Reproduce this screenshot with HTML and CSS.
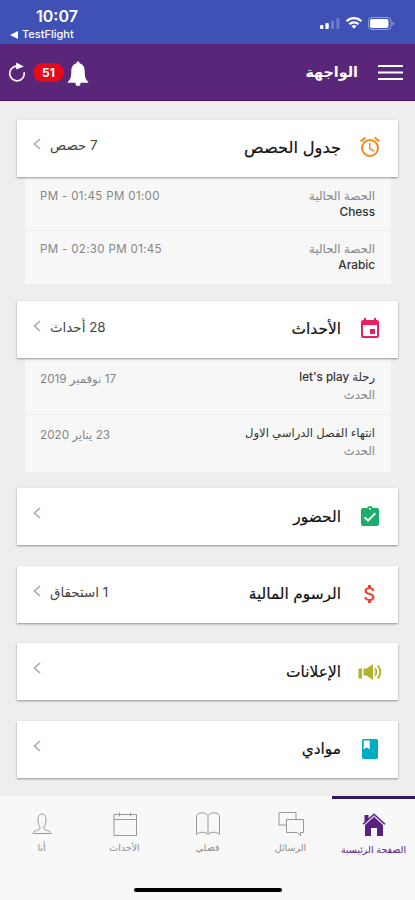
FILE: index.html
```html
<!DOCTYPE html>
<html lang="ar" dir="rtl">
<head>
    <meta charset="UTF-8">
    <meta name="viewport" content="width=device-width, initial-scale=1.0">
    <title>الواجهة</title>
    <link rel="stylesheet" href="styles.css">
</head>
<body>
    <div class="status-bar" dir="ltr">
        <div class="status-left">
            <div class="clock">10:07</div>
            <div class="back-app"><svg width="8" height="8" viewBox="0 0 8 8"><path d="M8 0v8L0 4z"/></svg>TestFlight</div>
        </div>
        <div class="status-icons">
            <svg width="21" height="13" viewBox="0 0 21 13">
                <rect x="1" y="8" width="3.4" height="4" rx="1"/>
                <rect x="6.4" y="6" width="3.4" height="6" rx="1"/>
                <rect x="12" y="3.5" width="3" height="8.5" rx="1" opacity=".25"/>
                <rect x="17.4" y="1" width="3" height="11" rx="1" opacity=".25"/>
            </svg>
            <svg width="18" height="14" viewBox="0 0 18 14" class="wifi">
                <path d="M1.6 5.2a10.5 10.5 0 0 1 14.8 0M4.4 8.3a6.5 6.5 0 0 1 9.200 0"/>
                <path d="M9 12.8L6.5 10.3a3.5 3.5 0 0 1 5 0z" class="wifi-dot"/>
            </svg>
            <svg width="27" height="13" viewBox="0 0 27 13">
                <rect x=".5" y=".5" width="22.5" height="12" rx="3.5" fill="none" stroke="#fff" stroke-opacity=".45"/>
                <rect x="2" y="2" width="18.5" height="9" rx="2"/>
                <path d="M24.5 4.200q3.4 2.300 0 4.600z" opacity=".45"/>
            </svg>
        </div>
    </div>

    <header class="header">
        <div class="header-title">
            <svg class="menu" width="25" height="17" viewBox="0 0 25 17"><path d="M0 2h25M0 8.500h25M0 15h25"/></svg>
            <h1>الواجهة</h1>
        </div>
        <div class="header-actions">
            <svg width="22" height="26" viewBox="0 0 22 26" class="bell">
                <path d="M11 0.500c1 0 1.500.7 1.500 1.700 4 1 5.200 4.300 5.200 8.300 0 5.500.8 8 3.600 10.500v.8H.7V21c2.800-2.500 3.600-5 3.600-10.500 0-4 1.200-7.300 5.200-8.300 0-1 .5-1.700 1.500-1.700zM8.500 21.500h5v1c0 1.700-1 2.500-2.500 2.500s-2.500-.8-2.500-2.500z"/>
            </svg>
            <span class="count">51</span>
            <svg width="18" height="20" viewBox="0 0 18 20" class="reload">
                <path d="M16.200 10.200A7.300 7.300 0 1 1 9.500 4.200" fill="none" stroke="#fff" stroke-width="1.700"/>
                <path d="M8.200.5L15.800 4.400 8.200 7.600z"/>
            </svg>
        </div>
    </header>

    <main class="content">
        <section class="schedule">
            <div class="card">
                <svg class="icon" width="24" height="24" viewBox="0 0 24 24" fill="#f58a1f"><path d="M22 5.720l-4.600-3.860-1.290 1.530 4.600 3.860L22 5.720zM7.880 3.390L6.600 1.860 2 5.710l1.290 1.530 4.590-3.850zM12.500 8H11v6l4.750 2.850.75-1.230-4-2.370V8zM12 4a9 9 0 1 0 0 18 9 9 0 0 0 0-18zm0 16a7 7 0 1 1 0-14 7 7 0 0 1 0 14z"/></svg>
                <h2>جدول الحصص</h2>
                <span class="total">7 حصص</span>
                <svg class="chevron" width="8" height="12" viewBox="0 0 8 12"><path d="M7 1L1.500 6 7 11"/></svg>
            </div>
            <div class="details">
                <div class="row">
                    <div class="names">
                        <div class="muted">الحصة الحالية</div>
                        <div class="strong">Chess</div>
                    </div>
                    <div class="time">01:00 PM - 01:45 PM</div>
                </div>
                <div class="row">
                    <div class="names">
                        <div class="muted">الحصة الحالية</div>
                        <div class="strong">Arabic</div>
                    </div>
                    <div class="time">01:45 PM - 02:30 PM</div>
                </div>
            </div>
        </section>

        <section class="events">
            <div class="card">
                <svg class="icon" width="24" height="24" viewBox="0 0 24 24" fill="#e91e63"><path d="M17 12h-5v5h5v-5zM16 1v2H8V1H6v2H5c-1.110 0-1.990.9-1.990 2L3 19a2 2 0 0 0 2 2h14c1.100 0 2-.9 2-2V5c0-1.100-.9-2-2-2h-1V1h-2zm3 18H5V8h14v11z"/></svg>
                <h2>الأحداث</h2>
                <span class="total">28 أحداث</span>
                <svg class="chevron" width="8" height="12" viewBox="0 0 8 12"><path d="M7 1L1.500 6 7 11"/></svg>
            </div>
            <div class="details">
                <div class="row">
                    <div class="names">
                        <div class="strong">رحلة let's play</div>
                        <div class="muted">الحدث</div>
                    </div>
                    <div class="time">17 نوفمبر 2019</div>
                </div>
                <div class="row">
                    <div class="names">
                        <div class="strong">انتهاء الفصل الدراسي الاول</div>
                        <div class="muted">الحدث</div>
                    </div>
                    <div class="time">23 يناير 2020</div>
                </div>
            </div>
        </section>

        <section class="card">
            <svg class="icon" width="24" height="24" viewBox="0 0 24 24" fill="#1bae6b"><path d="M19 3h-4.180C14.400 1.840 13.300 1 12 1s-2.400.84-2.820 2H5c-1.100 0-2 .9-2 2v14c0 1.100.9 2 2 2h14c1.100 0 2-.9 2-2V5c0-1.100-.9-2-2-2zm-7 0a1 1 0 1 1 0 2 1 1 0 0 1 0-2zm-2 14l-4-4 1.410-1.410L10 14.170l6.590-6.590L18 9l-8 8z"/></svg>
            <h2>الحضور</h2>
            <svg class="chevron" width="8" height="12" viewBox="0 0 8 12"><path d="M7 1L1.500 6 7 11"/></svg>
        </section>

        <section class="card">
            <svg class="icon" width="24" height="24" viewBox="0 0 24 24" fill="#f0402f"><path d="M11.800 10.900c-2.270-.59-3-1.200-3-2.150 0-1.090 1.010-1.850 2.700-1.850 1.780 0 2.440.85 2.500 2.100h2.210c-.07-1.720-1.120-3.300-3.210-3.810V3h-3v2.160c-1.940.42-3.500 1.680-3.500 3.610 0 2.310 1.910 3.460 4.700 4.130 2.500.6 3 1.480 3 2.410 0 .69-.49 1.790-2.700 1.790-2.060 0-2.870-.92-2.980-2.100h-2.200c.12 2.190 1.760 3.420 3.680 3.830V21h3v-2.150c1.950-.37 3.500-1.500 3.500-3.550 0-2.840-2.430-3.810-4.700-4.400z"/></svg>
            <h2>الرسوم المالية</h2>
            <span class="total">1 استحقاق</span>
            <svg class="chevron" width="8" height="12" viewBox="0 0 8 12"><path d="M7 1L1.500 6 7 11"/></svg>
        </section>

        <section class="card">
            <svg class="icon" width="24" height="24" viewBox="0 0 24 24" fill="#afb42b">
                <path d="M.5 8.500h3.500v10H.500zM5.500 8.500h3L15 4v16l-6.500-4.500h-3z"/>
                <path d="M17 8.500q2.800 3.500 0 7M19.800 5.500q5 6.500 0 13" fill="none" stroke="#afb42b" stroke-width="1.900"/>
            </svg>
            <h2>الإعلانات</h2>
            <svg class="chevron" width="8" height="12" viewBox="0 0 8 12"><path d="M7 1L1.500 6 7 11"/></svg>
        </section>

        <section class="card">
            <svg class="icon" width="24" height="24" viewBox="0 0 24 24"><rect x="4" y="2" width="16" height="20" rx="1.800" fill="#00acc1"/><path d="M5.700 3.500h6v9l-3-2.200-3 2.200z" fill="#fff"/></svg>
            <h2>موادي</h2>
            <svg class="chevron" width="8" height="12" viewBox="0 0 8 12"><path d="M7 1L1.500 6 7 11"/></svg>
        </section>
    </main>

    <nav class="tabs">
        <div class="tab active">
            <svg width="24" height="26" viewBox="0 0 24 26">
                <path d="M3 13l9-8 9 8v12h-6v-8H9v8H3z" fill="#5b2180"/>
                <path d="M2.500 4h4v5l-4 3.500z" fill="#5b2180"/>
                <path d="M1 13.200L12 3.200l11 10" fill="none" stroke="#5b2180" stroke-width="1.500"/>
                <path d="M2.500 14L12 5.400l9.500 8.600" fill="none" stroke="#f8f8f8" stroke-width=".9"/>
            </svg>
            <span>الصفحة الرئيسية</span>
        </div>
        <div class="tab">
            <svg width="26" height="26" viewBox="0 0 26 26" class="line"><path d="M8.500 14H1V1.500h17V8M8.500 8.500h17v13h-3v3l-3.500-3H8.500z"/></svg>
            <span>الرسائل</span>
        </div>
        <div class="tab">
            <svg width="26" height="26" viewBox="0 0 26 26" class="line"><path d="M13 4.500C10.500 1 3.500 1 1.500 4.500v19c3-3 8.500-3 11.500 0 3-3 8.500-3 11.500 0v-19C22.500 1 15.500 1 13 4.500zv19"/></svg>
            <span>فصلي</span>
        </div>
        <div class="tab">
            <svg width="26" height="26" viewBox="0 0 26 26" class="line"><path d="M2 3.500h22.500v21H2zM2 8.500h22.500M7.500 1.500v4M18.500 1.500v4"/></svg>
            <span>الأحداث</span>
        </div>
        <div class="tab">
            <svg width="26" height="26" viewBox="0 0 26 26" class="line"><path d="M4 22.500c0-3.500 7-2.500 7-5.500 0-2-2-3-2-7.500C9 5 10.500 3 13 3s4 2 4 6.500c0 4.500-2 5.500-2 7.500 0 3 7 2 7 5.500z"/></svg>
            <span>أنا</span>
        </div>
        <div class="home-indicator"></div>
    </nav>
</body>
</html>
```
FILE: styles.css
```css
* {
    margin: 0;
    padding: 0;
    box-sizing: border-box;
}

body {
    font-family: Inter, 'DejaVu Sans', sans-serif;
    background: #eee;
    color: #222;
    height: 900px;
    display: flex;
    flex-direction: column;
    overflow: hidden;
}

svg {
    display: block;
    flex-shrink: 0;
}

.status-bar {
    height: 44px;
    background: #3f51b5;
    color: #fff;
    display: flex;
    justify-content: space-between;
    padding: 7px 20px 0 10px;
}

.status-bar svg {
    fill: #fff;
}

.clock {
    font-size: 16px;
    line-height: 19px;
    font-weight: 600;
    padding-left: 26px;
}

.back-app {
    display: flex;
    align-items: center;
    gap: 4px;
    font-size: 11px;
    line-height: 17px;
    font-weight: 500;
}

.status-icons {
    display: flex;
    align-items: center;
    gap: 5px;
    height: 32px;
}

.status-bar .wifi {
    fill: none;
    stroke: #fff;
    stroke-width: 2.2;
}

.status-bar .wifi-dot {
    fill: #fff;
    stroke: none;
}

.header {
    height: 57px;
    background: #5a267a;
    border-bottom: 1px solid #43135f;
    color: #fff;
    display: flex;
    align-items: center;
    justify-content: space-between;
    padding: 0 12px 0 8px;
}

.header-title,
.header-actions {
    display: flex;
    align-items: center;
}

.header-title {
    gap: 20px;
}

.header-actions {
    gap: 3px;
}

.menu {
    stroke: #fff;
    stroke-width: 2;
}

.header h1 {
    font-size: 14.3px;
    line-height: 22px;
    font-weight: bold;
}

.bell,
.reload {
    fill: #fff;
}

.bell {
    margin-top: 3px;
}

.reload {
    margin-right: 4px;
}

.count {
    width: 31px;
    height: 19px;
    border-radius: 10px;
    background: #e30b1c;
    font-size: 12px;
    line-height: 19px;
    font-weight: 700;
    text-align: center;
}

.content {
    flex: 1;
    padding: 19px 17px 0;
    display: flex;
    flex-direction: column;
    gap: 20.5px;
}

.schedule,
.events {
    margin-bottom: -4px;
}

.card {
    height: 57px;
    background: #fff;
    box-shadow: 0 1px 2px rgba(0, 0, 0, 0.4);
    display: flex;
    align-items: center;
    padding: 0 16px;
    position: relative;
}

.schedule .card {
    padding-bottom: 3px;
}

.card h2 {
    font-size: 15.4px;
    line-height: 22px;
    font-weight: normal;
    margin-right: 17px;
    margin-left: auto;
    color: #111;
    -webkit-text-stroke: 0.2px #111;
}

.schedule .card h2 {
    font-size: 16.3px;
}

.total {
    font-size: 13.4px;
    line-height: 20px;
    color: #444;
    margin: 0 0 4px 9px;
}

.chevron {
    fill: none;
    stroke: #aaa;
    stroke-width: 1.6;
    margin-bottom: 7px;
}

.details {
    margin: 0 7px 0 8px;
    background: #f7f7f7;
}

.row {
    height: 53px;
    display: flex;
    justify-content: space-between;
    padding: 11px 16px 0 15px;
}

.row + .row {
    height: 54px;
    padding-top: 10px;
    border-top: 1px solid #eee;
}

.names {
    font-size: 11.8px;
    line-height: 16px;
}

.muted,
.time {
    color: #858585;
}

.strong {
    color: #333;
    font-weight: 500;
}

.time {
    font-size: 11.5px;
    line-height: 16px;
    letter-spacing: 0.35px;
}

.events .row {
    height: 56px;
    padding-top: 13px;
}

.events .row + .row {
    height: 58px;
    padding-top: 12px;
}

.events .names {
    font-size: 11.6px;
    line-height: 18px;
    margin-top: -3px;
}

.events .time {
    font-size: 11.7px;
    letter-spacing: normal;
}

.tabs {
    height: 104px;
    background: #f8f8f8;
    display: flex;
    position: relative;
}

.tab {
    flex: 1;
    border-top: 3px solid transparent;
    display: flex;
    flex-direction: column;
    align-items: center;
    padding-top: 12px;
    font-size: 9.5px;
    color: #8e8e8e;
    white-space: nowrap;
}

.tab span {
    line-height: 14px;
    margin-top: 4px;
}

.tab.active {
    border-color: #35176b;
    color: #5b2180;
}

.tab.active span {
    margin-top: 6px;
}

.line {
    fill: none;
    stroke: #999;
    stroke-width: 1;
}

.home-indicator {
    position: absolute;
    left: 134px;
    bottom: 8px;
    width: 148px;
    height: 4px;
    border-radius: 2px;
    background: #000;
}
```
